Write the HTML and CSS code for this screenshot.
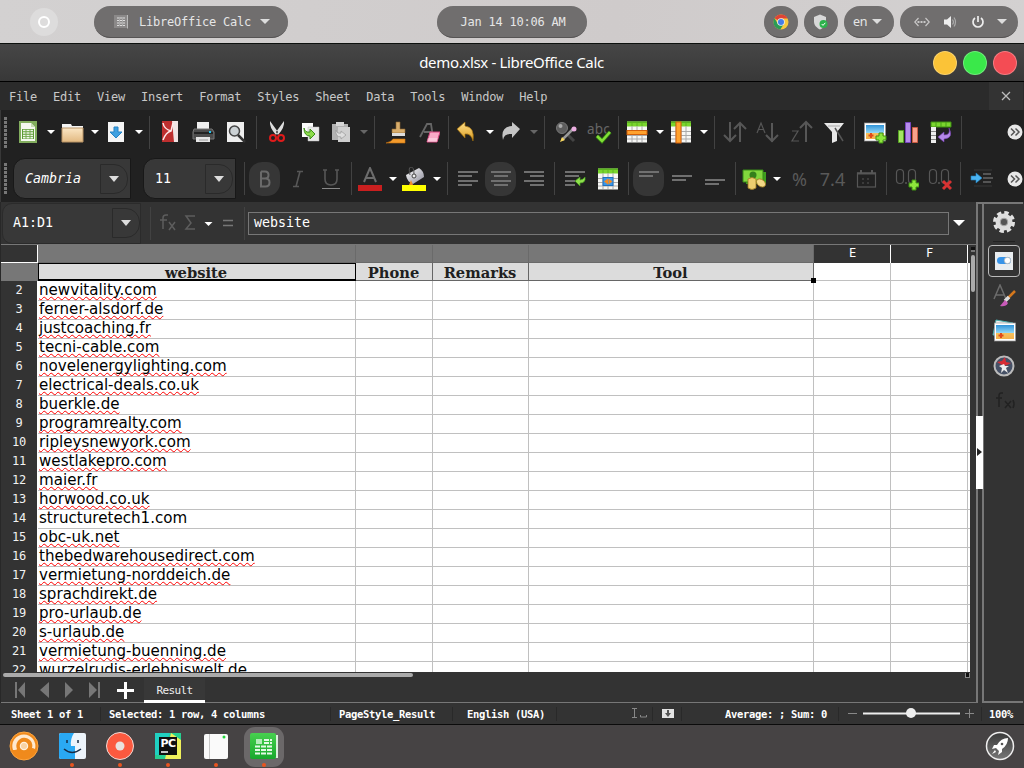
FILE: index.html
```html
<!DOCTYPE html>
<html lang="en">
<head>
<meta charset="utf-8">
<title>demo.xlsx - LibreOffice Calc</title>
<link rel="stylesheet" href="styles.css">
</head>
<body>
<svg width="0" height="0" class="defs">
  <defs>
    <linearGradient id="gGold" x2="0" y2="1"><stop offset="0" stop-color="#ffe08a"/><stop offset="1" stop-color="#d99a20"/></linearGradient>
    <linearGradient id="gFold" x2="0" y2="1"><stop offset="0" stop-color="#fbe6c4"/><stop offset="1" stop-color="#e2b981"/></linearGradient>
    <linearGradient id="gSky" x2="0" y2="1"><stop offset="0" stop-color="#2f93d8"/><stop offset=".6" stop-color="#9bdcf8"/><stop offset=".6" stop-color="#f6c05c"/><stop offset="1" stop-color="#f3b04a"/></linearGradient>
    <linearGradient id="gGreen" x2="0" y2="1"><stop offset="0" stop-color="#47d04f"/><stop offset="1" stop-color="#18a82c"/></linearGradient>
    <linearGradient id="gRocket" x2="0" y2="1"><stop offset="0" stop-color="#3a3a3a"/><stop offset="1" stop-color="#777"/></linearGradient>
    <linearGradient id="gMetal" x2="1" y2="1"><stop offset="0" stop-color="#fff"/><stop offset="1" stop-color="#8b8b99"/></linearGradient>
    <g id="plus"><path d="M-2-5h4v3h3v4h-3v3h-4v-3h-3v-4h3z" fill="#8ee63c" stroke="#3f8f12" stroke-width="1"/></g>
    <g id="sheet"><rect x="2" y="1.500" width="20" height="21" fill="#f7f7f5"/><rect x="2" y="1.500" width="20" height="5" fill="#7ad52e"/><path d="M2 2h20" stroke="#3f8f12"/><path d="M2 11.500h20M2 15.500h20M2 19h20M7 6v16M12 6v16M17 6v16" stroke="#aaa"/><path d="M7 2v4M12 2v4M17 2v4" stroke="#5cb520"/></g>
    <g id="beach"><rect x="1.500" y="3" width="21" height="18" fill="#fff" stroke="#999" stroke-width=".7"/><rect x="3" y="5" width="18" height="14" fill="url(#gSky)"/><path d="M8 13v5M5.500 15.500h5" stroke="#e04a18" stroke-width="2"/></g>
  </defs>
</svg>

<header class="panel">
  <span class="launcher"><i></i></span>
  <div class="pill app"><svg width="16" height="16"><path d="M1 1h13v13H1z" fill="#8b8989"/><path d="M14.500 1v13.500" stroke="#bbb"/><path d="M4 4h8M4 6.500h8M4 9h8M4 11.500h8" stroke="#ddd"/><path d="M6.500 3v9M9.500 3v9" stroke="#aaa"/></svg><span>LibreOffice Calc</span><b class="caret"></b></div>
  <div class="pill clock">Jan 14 10:06 AM</div>
  <div class="tray">
    <div class="pill round"><svg width="16" height="16" viewBox="0 0 16 16"><circle cx="8" cy="8" r="7.500" fill="#f7c93b"/><path d="M8 8 1.500 4.200A7.500 7.500 0 0 1 14.700 4.500H8z" fill="#de4436"/><path d="M8 8 4.900 9.800 1.500 4.200A7.500 7.500 0 0 0 7.300 15.500L11 9.800z" fill="#2a9c55"/><circle cx="8" cy="8" r="3.800" fill="#eee"/><circle cx="8" cy="8" r="3" fill="#447ee8"/></svg></div>
    <div class="pill round"><svg width="16" height="16" viewBox="0 0 16 16"><path d="M7 .5 13 3v4.500c0 4-3 6.500-6 8-3-1.500-6-4-6-8V3z" fill="#d8d8d8"/><circle cx="10.500" cy="10" r="4" fill="#2db34c"/><path d="m8.700 10 1.300 1.400 2.300-2.600" stroke="#fff" fill="none"/></svg></div>
    <div class="pill lang"><span>en</span><b class="caret"></b></div>
    <div class="pill status-icons">
      <svg width="16" height="16" fill="none" stroke="#c8c7c7" stroke-width="1.200"><path d="M4.500 4 .8 8l3.700 4M11.500 4l3.700 4-3.700 4"/><path d="M3.500 8h9" stroke-width="1.800" stroke-dasharray="2 1"/></svg>
      <svg width="16" height="16"><path d="M2 5.500h3L9 2v12l-4-3.500H2z" fill="#eee"/><path d="M10.500 5.500q2 2.500 0 5M12 3.500q3 4.500 0 9" fill="none" stroke="#aaa" stroke-width="1.200"/></svg>
      <svg width="16" height="16" fill="none" stroke="#eee" stroke-width="1.700"><path d="M5 4a5 5 0 1 0 6 0M8 2v6"/></svg>
      <b class="caret"></b>
    </div>
  </div>
</header>

<div class="titlebar"><span class="title">demo.xlsx - LibreOffice Calc</span><div class="winbtns"><i class="min"></i><i class="max"></i><i class="close"></i></div></div>

<nav class="menu"><span>File</span><span>Edit</span><span>View</span><span>Insert</span><span>Format</span><span>Styles</span><span>Sheet</span><span>Data</span><span>Tools</span><span>Window</span><span>Help</span>
  <div class="closedoc"><svg width="10" height="10"><path d="m1 1 8 8M9 1 1 9" stroke="#bbb" stroke-width="1.300"/></svg></div></nav>

<div class="toolbar standard">
  <span class="grip"></span>
  <div class="btn dd"><svg><rect x="3" y="1" width="18" height="22" fill="#82ad5e"/><path d="M5 3h10l4 4v14H5z" fill="#f4f8ef"/><path d="M15 3v4h4" fill="#c7dcb5"/><rect x="6" y="9" width="12" height="10" fill="#5d9c35"/><path d="M7 10.500h10M7 13h10M7 15.500h10M7 17.800h10" stroke="#eef5e8" stroke-width="1.500"/><path d="M10 9v10M14 9v10" stroke="#72a84f"/></svg></div>
  <div class="btn dd"><svg><path d="M2 4h9l1 2h11v5H2z" fill="#f4f4f4"/><path d="M2 8h21v14H2z" fill="url(#gFold)" stroke="#b99467"/></svg></div>
  <div class="btn dd"><svg><rect x="4" y="2" width="16" height="20" fill="#f5f5f5"/><path d="M10 7h4v5h4l-6 6-6-6h4z" fill="#3fa0e0" stroke="#2483c6"/></svg></div>
  <span class="sep"></span>
  <div class="btn"><svg><rect x="4" y="1" width="16" height="21" fill="#be2f2f"/><path d="M14 1h6v21h-4z" fill="#f0e4e4"/><path d="M5 3q1 6 8 8M5 20q3-8 8-9l2-8" stroke="#ffe9e9" stroke-width="1.500" fill="none"/></svg></div>
  <div class="btn"><svg><path d="M6 2h12v8H6z" fill="#eee"/><path d="M3 9h18l2 3v7H2v-7z" fill="#4b4b4b" stroke="#777"/><path d="M3 13h19" stroke="#222" stroke-width="2"/><path d="M5 17h14v5H5z" fill="#e5e5e5"/><path d="M8 20h9" stroke="#999"/><path d="M18 12h2" stroke="#25c6f0" stroke-width="2"/></svg></div>
  <div class="btn"><svg><path d="M3 2h17v20H3z" fill="#eee"/><circle cx="10.500" cy="11" r="5" fill="#ccd2d5" stroke="#444" stroke-width="1.500"/><path d="m14 15 7 7" stroke="#333" stroke-width="2.500"/></svg></div>
  <span class="sep"></span>
  <div class="btn"><svg><path d="M5 1q-1 6 6 14l2-3zM19 1q1 6-6 14l-2-3z" fill="#dedede"/><circle cx="8" cy="18" r="3" fill="none" stroke="#e01b1b" stroke-width="2"/><circle cx="16" cy="18" r="3" fill="none" stroke="#e01b1b" stroke-width="2"/></svg></div>
  <div class="btn"><svg><path d="M4 3h11v14H4z" fill="#fafafa"/><path d="M10 7h11v14H10z" fill="#e9e9e9" stroke="#bbb" stroke-width=".5"/><path d="M6 8q1 5 6 4V9l5 5-5 5v-3q-6 0-6-8" fill="#8edc4c" stroke="#3c8f18"/></svg></div>
  <div class="btn dd off"><svg><path d="M3 4h16v16H3z" fill="#b2b2b2"/><path d="M7 2h8v4H7z" fill="#d5d5d5"/><path d="M9 7h12v15H9z" fill="#cfcfcf"/><path d="M7 10q1 4 5 3v-2l5 4-5 4v-2q-6 0-5-7" fill="#ddd" stroke="#999" stroke-width=".7"/></svg></div>
  <span class="sep"></span>
  <div class="btn"><svg><path d="M13 2h4v7h5v4H9V9h4z" fill="#d8ad6c" stroke="#8e6430" stroke-width=".6"/><path d="M9 13h13v3H9z" fill="#ddd"/><path d="M10 19h12v4H3q5-1 7-4z" fill="#f39a2c" stroke="#c9720e" stroke-width=".6"/></svg></div>
  <div class="btn"><svg><path d="M4 17 11 4h4l2 13M8 12h8" fill="none" stroke="#666" stroke-width="1.800"/><path d="M14 12h10l-3 10h-10z" fill="#f9a9c6" stroke="#d7457f"/><path d="m12 18-1 4h10l1-4z" fill="#fff" opacity=".35"/></svg></div>
  <span class="sep"></span>
  <div class="btn dd"><svg><path d="M2 9 10 2v4q10 1 8 15-2-8-8-7v4z" fill="url(#gGold)" stroke="#9a6a0c" stroke-width=".7"/></svg></div>
  <div class="btn dd off"><svg><path d="M21 9 13 2v4Q1 7 4 20q1-7 9-6v4z" fill="#c5c5c5"/></svg></div>
  <span class="sep"></span>
  <div class="btn"><svg><circle cx="9" cy="8" r="5.500" fill="#5d5d5d" stroke="#777"/><circle cx="7.500" cy="6" r="2" fill="#aaa"/><path d="m14 14 7 7" stroke="#444" stroke-width="3"/><path d="M9 20 20 9" stroke="#999" stroke-width="2.500"/><circle cx="21" cy="9" r="2.500" fill="#ecaee2"/><path d="m7 22 2-5 3 3z" fill="#f7d75f"/></svg></div>
  <div class="btn"><svg class="wide"><text x="1" y="13.500" class="abc">abc</text><path d="m11 16 5 5 8-9" fill="none" stroke="#2f7a10" stroke-width="4"/><path d="m11 16 5 5 8-9" fill="none" stroke="#82df37" stroke-width="2.500"/></svg></div>
  <span class="sep"></span>
  <div class="btn dd"><svg><use href="#sheet"/><rect x="2" y="10.500" width="20" height="4" fill="#ffa22e" stroke="#d4610a"/></svg></div>
  <div class="btn dd"><svg><use href="#sheet"/><rect x="7" y="2" width="5" height="21" fill="#ffa22e" stroke="#d4610a"/></svg></div>
  <span class="sep"></span>
  <div class="btn"><svg class="dim"><path d="M7 2v19M1 15l6 6 6-6M17 22V3M11 9l6-6 6 6"/></svg></div>
  <div class="btn"><svg class="dim"><path d="M16 3v19M10 15l6 6 6-6"/><path d="m1 13 4-10 4 10M2 9.500h6" stroke-width="1.200"/></svg></div>
  <div class="btn"><svg class="dim"><path d="M17 22V2M11 8l6-6 6 6"/><path d="M3 11h6L3 21h7" stroke-width="1.200"/></svg></div>
  <div class="btn"><svg><path d="M2 3h20l-7 9v9l-5 2V12z" fill="#e8e8e8"/><path d="M13 8 21 21" stroke="#555" stroke-width="1.500"/><path d="M6 6h12" stroke="#aaa"/></svg></div>
  <span class="sep"></span>
  <div class="btn"><svg><use href="#beach"/><use href="#plus" x="18" y="18"/></svg></div>
  <div class="btn"><svg stroke-width="1"><path d="M2.500 10.500h5v12h-5z" fill="#a4e464" stroke="#56a322"/><path d="M9.500 2.500h5v20h-5z" fill="#b78bec" stroke="#7846c0"/><path d="M16.500 7.500h5v15h-5z" fill="#f7a18c" stroke="#ca5a43"/></svg></div>
  <div class="btn"><svg><path d="M2 2h20v5H2z" fill="#7ad52e" stroke="#3f8f12"/><path d="M2 7h5v16H2z" fill="#eee"/><path d="M2 11.500h5M2 15.500h5M2 19.500h5" stroke="#888"/><path d="M7 2v5M12 2v5M17 2v5" stroke="#489d17"/><path d="M20 8q2 7-5 7v-3l-6 5 6 5v-3q10-1 5-11" fill="#b588e8" stroke="#7840b8" stroke-width=".6"/></svg></div>
  <span class="sep"></span>
  <span class="more"><svg width="16" height="16"><circle cx="8" cy="8" r="7.500" fill="#e8e8e8"/><path d="m4 4.500 3.500 3.500L4 11.500M8.500 4.500 12 8l-3.500 3.500" fill="none" stroke="#555" stroke-width="1.500"/></svg></span>
</div>

<div class="toolbar format">
  <span class="grip"></span>
  <div class="combo font"><em>Cambria</em><span><b class="caret"></b></span></div>
  <div class="combo size">11<span><b class="caret"></b></span></div>
  <span class="sep"></span>
  <div class="btn on"><svg class="dim"><path d="M8 4.500v15h4.500q4 0 4-4t-4-4H8M8 4.500h4q3.500 0 3.500 3.500t-3.500 3.500" stroke="#6a6a6a"/></svg></div>
  <div class="btn"><svg class="dim"><path d="M11 4.500h6M7 19.500h6M14 4.500l-4 15" stroke-width="1.600"/></svg></div>
  <div class="btn"><svg class="dim"><path d="M6 3v9q0 6 6 6t6-6V3M4 3h4M16 3h4" stroke-width="1.600"/><path d="M3 21.500h18" stroke="#888" stroke-width="1"/></svg></div>
  <span class="sep"></span>
  <div class="btn dd"><svg><path d="m6 15 6-14 6 14M8 11h8" fill="none" stroke="#6c6c6c" stroke-width="2"/><rect y="18" width="24" height="6" fill="#c91f1f"/></svg></div>
  <div class="btn dd"><svg><path d="M4 8 17 1q5 3 5 9l-11 7q-6-2-7-9z" fill="url(#gMetal)"/><path d="M8 8Q6 0 9 0t3 7" stroke="#555" fill="none"/><circle cx="12" cy="9" r="2" fill="#eee" stroke="#444"/><path d="m9 13 2 5H7z" fill="#ef8b28"/><rect y="18" width="24" height="6" fill="#ff0"/></svg></div>
  <span class="sep"></span>
  <div class="btn"><svg class="lines"><path d="M2 5h20M2 9h14M2 14h20M2 18h14"/></svg></div>
  <div class="btn on"><svg class="lines"><path d="M2 5h20M5 9h14M2 14h20M5 18h14"/></svg></div>
  <div class="btn"><svg class="lines"><path d="M2 5h20M8 9h14M2 14h20M8 18h14"/></svg></div>
  <span class="sep"></span>
  <div class="btn"><svg class="lines"><path d="M2 5h20M2 9h14M2 14h10M2 18h10"/><path d="M22 10q1 6-5 6v3l-5-5 5-4v3q3 0 5-3" fill="#8fe04d" stroke="#459b1d" stroke-width=".7"/></svg></div>
  <div class="btn"><svg><use href="#sheet"/><rect x="7" y="10.500" width="10" height="8" fill="#3b97e8" stroke="#1e6fbe"/><path d="m8 14.500 4-3v6zM16.500 14.500l-4-3v6z" fill="#f28a24"/></svg></div>
  <span class="sep"></span>
  <div class="btn on"><svg class="lines"><path d="M2 5h20M2 9h14"/></svg></div>
  <div class="btn"><svg class="lines"><path d="M2 9h20M2 13h14"/></svg></div>
  <div class="btn"><svg class="lines"><path d="M2 13h20M2 17h14"/></svg></div>
  <span class="sep"></span>
  <div class="btn dd"><svg><path d="M4 5h20v12H4z" fill="#3f9e1e"/><path d="M1 3h20v12H1z" fill="#82d63d" stroke="#388a18"/><circle cx="11" cy="8" r="3.500" fill="#347f1b"/><path d="M6 12q4-3 8 0v9q-4 3-8 0z" fill="#ecce70" stroke="#a07b22" stroke-width=".8"/><ellipse cx="19" cy="16" rx="5" ry="3.500" transform="rotate(35 19 16)" fill="#f3d887" stroke="#a07b22" stroke-width=".8"/></svg></div>
  <div class="btn num">%</div>
  <div class="btn num">7.4</div>
  <div class="btn"><svg class="dim"><rect x="3.500" y="6" width="18" height="14" stroke-width="1.200"/><path d="M3 6.500h19M7 3v3M18 3v3" stroke-width="2"/><path d="M8 12h10M8 16h10" stroke-width="1" stroke-dasharray="2 3"/></svg></div>
  <span class="sep"></span>
  <div class="btn"><svg class="dim"><rect x="1.500" y="2.500" width="7" height="14" rx="3.500" stroke-width="1.200"/><rect x="13.500" y="2.500" width="7" height="14" rx="3.500" stroke-width="1.200"/><path d="M11 15v2" stroke-width="1.500"/><use href="#plus" x="19" y="18"/></svg></div>
  <div class="btn"><svg class="dim"><rect x="1.500" y="2.500" width="7" height="14" rx="3.500" stroke-width="1.200"/><rect x="13.500" y="2.500" width="7" height="14" rx="3.500" stroke-width="1.200"/><path d="M11 15v2" stroke-width="1.500"/><path d="m15 14 8 8m0-8-8 8" stroke="#d83232" stroke-width="3"/></svg></div>
  <span class="sep"></span>
  <div class="btn"><svg><path d="M5 3h18M5 19h18" stroke="#383838"/><path d="M14 7h8M14 11h10M14 15h8" stroke="#555" stroke-width="2"/><path d="M2 9h5V6l6 5-6 5v-3H2z" fill="#4ab4f2" stroke="#2382be" stroke-width=".6"/></svg></div>
  <span class="more"><svg width="16" height="16"><circle cx="8" cy="8" r="7.500" fill="#e8e8e8"/><path d="m4 4.500 3.500 3.500L4 11.500M8.500 4.500 12 8l-3.500 3.500" fill="none" stroke="#555" stroke-width="1.500"/></svg></span>
</div>

<main class="work">
  <section class="editor">
    <div class="formula">
      <div class="combo name">A1:D1<span><b class="caret"></b></span></div>
      <span class="sep"></span>
      <svg class="fn" width="86" height="24" fill="none" stroke="#5d5d5d" stroke-width="1.500"><path d="M14 4h-2q-3 0-3 3v11M6 9h7M15 11l6 8M21 11l-6 8"/><path d="M41 5h-9l5 7-5 6h9"/><path d="m50.500 11 4 4 4-4z" fill="#fff" stroke="none"/><path d="M69 9.500h10M69 14.500h10" stroke="#777"/></svg>
      <span class="sep"></span>
      <div class="input">website</div>
      <b class="caret white"></b>
    </div>
    <div class="gridwrap">
      <div class="grid" id="grid">
        <div class="row head"><i></i><i class="sel"></i><i class="sel"></i><i class="sel"></i><i class="sel"></i><i>E</i><i>F</i><i></i></div>
        <div class="row first"><i></i><i class="active">website</i><i class="sel">Phone</i><i class="sel">Remarks</i><i class="sel last">Tool<b></b></i><i></i><i></i><i></i></div>
      </div>
      <div class="vscroll"><i></i></div>
    </div>
    <div class="hscroll"><i></i><u></u></div>
    <div class="tabs">
      <svg width="90" height="18" fill="#777"><path d="M1 1h2v16H1zM11 1v16L4 9zM35 1v16L26 9zM51 1v16l8-8zM75 1v16l8-8zM84 1h2v16h-2z"/></svg>
      <svg class="add" width="17" height="17"><path d="M8.500 0v17M0 8.500h17" stroke="#fff" stroke-width="3"/></svg>
      <span class="tab">Result</span>
    </div>
  </section>
  <div class="splitter"><i></i></div>
  <aside class="side">
    <svg viewBox="0 0 24 24"><circle cx="12" cy="12" r="9" fill="none" stroke="#e2e2e2" stroke-width="4" stroke-dasharray="4.200 2.870"/><circle cx="12" cy="12" r="8.500" fill="#ddd"/><circle cx="12" cy="12" r="3.800" fill="#555" stroke="#aaa"/></svg>
    <hr>
    <div class="picked"><svg viewBox="0 0 24 24"><path d="M3 3h18v18H3z" fill="#e9edf0"/><rect x="5" y="8" width="14" height="7" rx="3.500" fill="#3894e8"/><circle cx="15.500" cy="11.500" r="3.200" fill="#fff" stroke="#aaa" stroke-width=".7"/></svg></div>
    <svg viewBox="0 0 24 24"><path d="m2 15 6-14 6 14M4 11h8" fill="none" stroke="#6b6b6b" stroke-width="1.500"/><path d="m16 14 7-7" stroke="#d5781d" stroke-width="2.500"/><path d="m13 17 4-4" stroke="#ddd" stroke-width="3.500"/><path d="m8 22 5-6 3 3q-2 4-8 3" fill="#c85ab8"/></svg>
    <svg viewBox="0 0 24 24"><path d="m4 1 17 3-1 13L1 16z" fill="#eee" stroke="#4aa"/><use href="#beach" x="1" y="1"/></svg>
    <svg viewBox="0 0 24 24"><circle cx="12" cy="12" r="9.500" fill="#465166" stroke="#bbb" stroke-width="2"/><path d="m12 12-7-4 5-1 3-4 1 5 5 1-4 2z" fill="#d82c34"/><path d="m12 10 1 2 4 0-3 2 2 5-4-3-3 3 1-5-3-2z" fill="#eee"/></svg>
    <svg viewBox="0 0 24 24" fill="none" stroke="#222" stroke-width="1.500"><path d="M11 4H9Q7 4 7 7v11M4 9h6M13 12l6 7M19 12l-6 7M21 11q2 4 0 8"/></svg>
  </aside>
</main>

<footer class="statusbar">
  <span class="s1">Sheet 1 of 1</span><span class="s2">Selected: 1 row, 4 columns</span><span class="s3">PageStyle_Result</span><span class="s4">English (USA)</span>
  <span class="s5"><svg width="18" height="12" fill="none" stroke="#888"><path d="M1 1.500h5M1 10.500h5M3.500 1v9M9.500 8v2h6V8"/></svg></span>
  <span class="s6"><svg width="12" height="10"><path d="M0 0h12v9H0z" fill="#e3e3e3"/><path d="M5 1h2v3h2L6 8 3 4h2z" fill="#555"/></svg></span>
  <span class="s7">Average: ; Sum: 0</span>
  <span class="s8"><svg width="130" height="12"><path d="M2 6.500h9M119 6.500h9M123.500 2v9" stroke="#888"/><path d="M17 6.500h97" stroke="#eee" stroke-width="2"/><circle cx="65" cy="6" r="5" fill="#eee"/></svg></span>
  <span class="s9">100%</span>
</footer>

<div class="dock">
  <div class="app-slot"><svg viewBox="0 0 30 30"><circle cx="15" cy="15" r="14" fill="#f08a1c" stroke="#ffa640"/><path d="M15 3.500A11.500 11.500 0 0 1 26 18q-2-1-3-1A8 8 0 1 0 8 18q0 1-4 1A11.500 11.500 0 0 1 15 3.500" fill="#ffe9cf"/><circle cx="15" cy="15" r="5.500" fill="#fff1de" stroke="#ef8a1c" stroke-width="2.500"/><circle cx="15" cy="15" r="3" fill="#f9d3a4"/></svg></div>
  <div class="app-slot run"><svg viewBox="0 0 30 30"><rect x="2" y="2" width="27" height="26" rx="2" fill="#edf4fb"/><path d="M4 2h13q-4 6-3 13h4v13H4q-2 0-2-2V4q0-2 2-2" fill="#2aa9f4"/><path d="M7 18q8 7 17 0M10 9v3M21 9v3" fill="none" stroke="#182c45" stroke-width="1.500"/></svg></div>
  <div class="app-slot run"><svg viewBox="0 0 30 30"><circle cx="15" cy="15" r="13.500" fill="#fb593f" stroke="#f2dcd8"/><circle cx="15" cy="15" r="4.500" fill="#e9e1df"/></svg></div>
  <div class="app-slot run"><svg viewBox="0 0 30 30"><path d="M2 2h26v26H2z" fill="#25cf91"/><path d="m18 2 10 7v19H12z" fill="#eff05b"/><path d="M2 2h15L8 24H2z" fill="#20d0c1"/><path d="M6 6h18v18H6z" fill="#101010"/><text x="7.500" y="16" class="pc">PC</text><path d="M8 21h7" stroke="#fff" stroke-width="1.500"/></svg></div>
  <div class="app-slot run"><svg viewBox="0 0 30 30"><rect x="3" y="3" width="24" height="25" rx="2" fill="#fafafa"/><path d="M8.500 3v25" stroke="#c8c8c8"/><circle cx="23" cy="6" r="1.500" fill="#22d53c"/></svg></div>
  <div class="app-slot run current"><svg viewBox="0 0 30 30"><path d="M4 4h25v23H4z" fill="#dceedd"/><rect x="1" y="2" width="26" height="26" rx="2" fill="url(#gGreen)"/><path d="M15 9h8M15 12h8M6 15.500h17M6 19h17M6 22.500h17" stroke="#e4f9e6" stroke-width="2" stroke-dasharray="5 1"/><path d="M7 8h6v5H7z" fill="#b6edbc"/></svg></div>
  <svg class="rocket" width="30" height="30"><circle cx="15" cy="15" r="13.500" fill="url(#gRocket)" stroke="#eee" stroke-width="1.500"/><path d="M23 7q-7 0-11 7H9l-2 4 4-1 3 3-1 4 4-3v-3q6-4 6-11M10 19l-3 4 4-2z" fill="#fff"/><circle cx="17" cy="13" r="1.300" fill="#555"/></svg>
</div>
<script src="rows.js"></script>
</body>
</html>
```

FILE: rows.js
```js
const sites = ["newvitality.com", "ferner-alsdorf.de", "justcoaching.fr", "tecni-cable.com",
  "novelenergylighting.com", "electrical-deals.co.uk", "buerkle.de", "programrealty.com",
  "ripleysnewyork.com", "westlakepro.com", "maier.fr", "horwood.co.uk", "structuretech1.com",
  "obc-uk.net", "thebedwarehousedirect.com", "vermietung-norddeich.de", "sprachdirekt.de",
  "pro-urlaub.de", "s-urlaub.de", "vermietung-buenning.de", "wurzelrudis-erlebniswelt.de"];
const grid = document.getElementById("grid");
sites.forEach((site, index) => {
  const row = document.createElement("div");
  row.className = "row";
  // Words containing digits are skipped by the spell checker.
  const kind = /\d/.test(site) ? "" : "misspelt";
  row.innerHTML = `<i>${index + 2}</i><i><span class="${kind}">${site}</span></i>` + "<i></i>".repeat(6);
  grid.append(row);
});
```

FILE: styles.css
```css
* { box-sizing: border-box; }
body { margin: 0; width: 1024px; height: 768px; overflow: hidden; background: #464344; color: #eee; font: 12px/16px "DejaVu Sans Mono", monospace; letter-spacing: -.22px; display: flex; flex-direction: column; }
i { font-style: normal; }
svg { display: block; flex: none; }
.defs { position: absolute; }
.caret { width: 0; height: 0; border: 5px solid transparent; border-top-color: #ddd; border-bottom: 0; flex: none; }

.panel { position: relative; flex: none; height: 43px; padding: 6px 6px 0 30px; background: linear-gradient(100deg, #d3d1d1, #cfcbcb 60%, #d3d1d1); display: flex; }
.launcher { width: 28px; height: 28px; margin: 2px 36px 0 0; border-radius: 50%; background: #dddcdc; display: flex; align-items: center; justify-content: center; }
.launcher i { width: 12px; height: 12px; border: 2px solid #fff; border-radius: 50%; }
.pill { height: 32px; border-radius: 16px; background: #706e6e; border-bottom: 1px solid #565454; display: flex; align-items: center; color: #e6e6e6; }
.pill.app { width: 194px; padding-left: 19px; }
.pill.app span { margin: 0 9px 0 10px; }
.pill.clock { width: 150px; margin-left: 149px; padding-left: 2px; justify-content: center; }
.tray { display: flex; gap: 6px; margin-left: auto; }
.pill.round { width: 34px; justify-content: center; }
.pill.lang { width: 50px; padding-left: 9px; gap: 5px; font: 12.500px "Noto Sans", sans-serif; }
.pill.status-icons { width: 118px; padding-left: 14px; gap: 12px; }
.status-icons .caret { margin-left: -1px; }

.titlebar { position: relative; flex: none; height: 39px; border-top: 1px solid #0d110e; border-bottom: 1px solid #000; background: linear-gradient(#464646, #383838); display: flex; align-items: center; justify-content: center; }
.title { font: 15px "Noto Sans", sans-serif; letter-spacing: -.34px; color: #fff; margin: -2px 1px 0 0; }
.winbtns { position: absolute; right: 7px; top: 7px; display: flex; gap: 6px; }
.winbtns i { width: 24px; height: 24px; border-radius: 50%; border: 1px solid #ffffff44; }
.min { background: #fbc337; } .max { background: #3ae84a; } .close { background: #f44c54; }
.menu { flex: none; height: 28px; background: #2b2b2b; display: flex; align-items: center; gap: 16px; padding-left: 9px; color: #c8c8c8; }
.menu > span { padding-top: 2px; }
.closedoc { margin: 0 1px 0 auto; width: 34px; height: 28px; background: #333; display: flex; align-items: center; justify-content: center; }

.toolbar { position: relative; flex: none; background: #212121; display: flex; align-items: center; border-left: 1px solid #383838; }
.standard { height: 44px; padding-left: 3px; }
.format { height: 48px; padding-left: 3px; padding-top: 1px; }
.grip { width: 3px; height: 31px; background: repeating-linear-gradient(#777 0 3px, #212121 3px 4px); }
.standard .grip { margin-right: 6px; }
.format .grip { margin-right: 6px; }
.btn { flex: none; width: 33px; height: 34px; display: flex; align-items: center; justify-content: center; position: relative; }
.btn svg { width: 24px; height: 24px; }
.btn svg.wide { overflow: visible; }
.btn.dd { width: 44px; justify-content: flex-start; padding-left: 3px; }
.btn.dd::after { content: ""; margin-left: 7px; border: 4px solid transparent; border-top-color: #fff; border-bottom: 0; }
.btn.dd.off::after { border-top-color: #666; }
.btn.on { background: #363636; border-radius: 13px; width: 31px; margin: 0 1px; }
.sep { flex: none; width: 8px; height: 33px; padding-left: 4px; }
.sep::before { content: ""; display: block; width: 1px; height: 100%; background: #424242; }
.dim { fill: none; stroke: #575757; stroke-width: 2; }
.lines { stroke: #707070; stroke-width: 2; fill: none; }
.abc { font: 13.500px "Noto Sans", sans-serif; fill: #666; letter-spacing: .2px; }
.num { font: 18px "Noto Sans", sans-serif; color: #595959; letter-spacing: 0; }
.more { position: absolute; right: 1px; }
.combo { display: flex; align-items: center; background: #383838; border: 1px solid #181818; color: #fff; font-size: 13.300px; letter-spacing: 0; }
.combo > span { margin-left: auto; width: 28px; height: 30px; border: 1px solid #2a2a2a; border-radius: 0 14px 14px 0; display: flex; align-items: center; justify-content: center; }
.combo.font { width: 118px; height: 41px; border-radius: 12px 0 0 12px; padding: 0 2px 0 11px; margin-right: 12px; }
.combo.size { width: 93px; height: 41px; border-radius: 12px 0 0 12px; padding: 0 2px 0 11px; margin-right: 4px; }
.toolbar .caret, .name .caret { border-width: 6px 5px 0; }

.work { flex: none; height: 501px; display: flex; background: #333; border-left: 1px solid #282828; }
.editor { width: 975px; display: flex; flex-direction: column; }
.formula { height: 42px; display: flex; align-items: center; padding-left: 1px; }
.combo.name { width: 139px; height: 41px; border-color: #2b2b2b; border-radius: 10px 0 0 10px; padding: 0 0 0 10px; margin-right: 5px; }
.input { width: 701px; height: 23px; margin: 0 4px 0 0; border: 1px solid #777; background: #383838; padding: 2px 5px; color: #fff; font-size: 13.300px; letter-spacing: 0; }
.caret.white { border-width: 6px 6px 0; border-top-color: #fff; }

.gridwrap { height: 428px; display: flex; overflow: hidden; border-top: 1px solid #777; }
.grid { width: 969px; background: #fff; }
.row { display: grid; grid-template-columns: 37px 318px 77px 96px 285px 77px 77px 2px; height: 19px; }
.row > i { border-right: 1px solid #c0c0c0; border-bottom: 1px solid #c0c0c0; color: #000; font: 15.100px/18px "DejaVu Sans", sans-serif; letter-spacing: 0; white-space: nowrap; padding-left: 1px; }
.row > i:first-child { background: #333; color: #f2f2f2; text-align: center; border-color: #fff; font: 12px/19px "DejaVu Sans Mono", monospace; letter-spacing: -.22px; padding: 0; }
.row > i:last-child { border-right: 0; }
.head { height: 18px; }
.head > i, .head > i:first-child { background: #333; border-color: #fff; color: #fff; text-align: center; font: 12px/17px "DejaVu Sans Mono", monospace; padding: 0 0 0 1px; }
.head > i:nth-child(n+6) { border-bottom: 0; }
.head > i.sel { background: #777; border-color: #6a6a6a; }
.first { height: 18px; }
.first > i:first-child { background: #777; border-color: #777; }
.first > i { height: 18px; }
.first > i.sel, .first > i.active { position: relative; background: #dcdcdc; border-color: #666; text-align: center; font: bold 14.670px/19px "DejaVu Serif", serif; letter-spacing: 0; color: #202020; padding: 0 1px 0 0; }
.first > i.active { outline: 1px solid #000; outline-offset: -1px; border-color: #000; border-bottom-width: 2px; }
.last b { position: absolute; right: -3px; bottom: -3px; width: 5px; height: 5px; background: #000; }
.misspelt { text-decoration: underline wavy #f00 1px; text-decoration-skip-ink: none; text-underline-offset: 1px; }
.vscroll { width: 6px; padding: 2px 1px; background: #333; }
.vscroll::before { content: ""; display: block; height: 3px; margin-bottom: 3px; background: #111; border-bottom: 2px solid #777; }
.vscroll i { display: block; width: 4px; height: 37px; border-radius: 2px; background: #aaa; }
.hscroll { height: 6px; padding: 1px 0 0 2px; display: flex; }
.hscroll i { width: 410px; height: 4px; border-radius: 2px; background: #aaa; }
.hscroll u { width: 5px; height: 5px; margin-left: 552px; border: 1px solid #888; border-top: 0; background: #111; }
.tabs { height: 25px; display: flex; align-items: center; padding-left: 13px; border-bottom: 1px solid #777; }
.tabs .add { margin-left: 13px; }
.tab { margin-left: 10px; width: 61px; height: 25px; line-height: 25px; text-align: center; background: #383838; border-bottom: 3px solid #fff; font-size: 11px; letter-spacing: -.62px; }
.splitter { width: 8px; border: 2px solid #777; border-bottom: 0; position: relative; }
.splitter i { position: absolute; top: 212px; left: -2px; width: 7px; height: 73px; background: #fff; }
.splitter i::after { content: ""; position: absolute; left: 1px; top: 32px; border: 4px solid transparent; border-left: 5px solid #222; border-right: 0; }
.side { flex: 1; border-top: 2px solid #777; border-bottom: 2px solid #777; margin-right: 1px; display: flex; flex-direction: column; align-items: center; padding: 6px 0 0 0; }
.side svg { width: 24px; height: 24px; margin-bottom: 11px; }
.side > svg:first-child { margin-bottom: 7px; }
.side hr { width: 22px; margin: 0 0 3px; border: 0; border-top: 1px solid #222; }
.picked { width: 32px; height: 32px; border: 1px solid #bbb; border-radius: 4px; padding: 3px; margin-bottom: 7px; }

.statusbar { flex: none; height: 22px; background: #333; border-bottom: 1px solid #0b0b0b; display: grid; grid-template-columns: 101px 230px 122px 104px 96px 29px 30px 127px 143px 42px; align-items: center; font-weight: bold; font-size: 10.500px; letter-spacing: -.32px; color: #fff; }
.statusbar span { border-right: 1px solid #292929; height: 14px; line-height: 14px; white-space: nowrap; }
.s1 { padding-left: 11px; }
.s2, .s3 { padding-left: 8px; }
.s4 { padding-left: 14px; }
.s5 { padding-left: 74px; }
.s6 { padding: 2px 0 0 9px; }
.statusbar .s7 { grid-column: 7 / 9; padding-left: 43px; }
.s8 { padding-left: 7px; }
.statusbar .s9 { border: 0; padding-left: 7px; }

.dock { flex: 1; display: flex; align-items: flex-start; padding: 2px 9px 0 4px; gap: 8px; }
.app-slot { width: 40px; height: 40px; padding-top: 4px; border-radius: 11px; display: flex; flex-direction: column; align-items: center; gap: 2px; }
.app-slot svg { width: 30px; height: 30px; }
.run::after { content: ""; width: 4px; height: 4px; border-radius: 50%; background: #e9541f; }
.current { background: #6b6869; }
.rocket { margin: 4px 0 0 auto; }
.pc { font: bold 11px "DejaVu Sans", sans-serif; fill: #fff; letter-spacing: -.5px; }
```
